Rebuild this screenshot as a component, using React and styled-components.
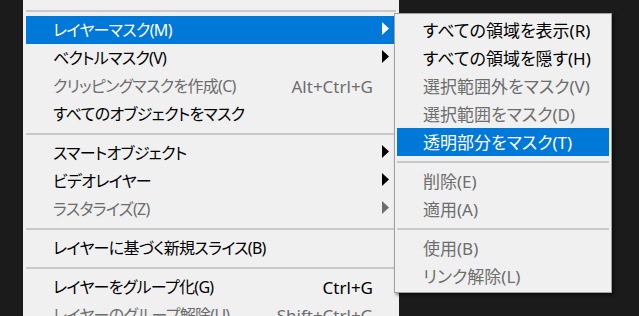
import React from 'react'
import styled, { createGlobalStyle } from 'styled-components'

const GlobalStyle = createGlobalStyle`
html, body {
  margin: 0;
  height: 316px;
  overflow: hidden;
  background: #1b1b1b;
}
body {
  font-family: "Noto Sans", "Noto Sans CJK JP", sans-serif;
  font-size: 17px;
  font-feature-settings: "palt";
}
`

const mainItems = [
  { sep: true },
  { label: 'レイヤーマスク(M)', sub: true, active: true },
  { label: 'ベクトルマスク(V)', sub: true },
  { label: 'クリッピングマスクを作成(C)', key: 'Alt+Ctrl+G', disabled: true },
  { label: 'すべてのオブジェクトをマスク' },
  { sep: true },
  { label: 'スマートオブジェクト', sub: true },
  { label: 'ビデオレイヤー', sub: true },
  { label: 'ラスタライズ(Z)', sub: true, disabled: true },
  { sep: true },
  { label: 'レイヤーに基づく新規スライス(B)' },
  { sep: true },
  { label: 'レイヤーをグループ化(G)', key: 'Ctrl+G' },
  { label: 'レイヤーのグループ解除(U)', key: 'Shift+Ctrl+G', disabled: true },
]

const subItems = [
  { label: 'すべての領域を表示(R)' },
  { label: 'すべての領域を隠す(H)' },
  { label: '選択範囲外をマスク(V)', disabled: true },
  { label: '選択範囲をマスク(D)', disabled: true },
  { label: '透明部分をマスク(T)', active: true },
  { sep: true },
  { label: '削除(E)', disabled: true },
  { label: '適用(A)', disabled: true },
  { sep: true },
  { label: '使用(B)', disabled: true },
  { label: 'リンク解除(L)', disabled: true },
]

const Arrow = () => (
  <svg width="7" height="13" viewBox="0 0 7 13">
    <polygon points="0,0 7,6.5 0,13" fill="currentColor" />
  </svg>
)

const App = () => {
  return (
    <Page>
      <GlobalStyle />
      <Menu>
        {mainItems.map((it, i) =>
          it.sep ? (
            <Separator key={i} />
          ) : (
            <Item key={i} $active={it.active} $disabled={it.disabled}>
              <Label>{it.label}</Label>
              {it.key && <Shortcut>{it.key}</Shortcut>}
              <ArrowCell>{it.sub && <Arrow />}</ArrowCell>
            </Item>
          )
        )}

        <SubMenu>
          {subItems.map((it, i) =>
            it.sep ? (
              <Separator key={i} />
            ) : (
              <SubItem key={i} $active={it.active} $disabled={it.disabled}>
                {it.label}
              </SubItem>
            )
          )}
        </SubMenu>
      </Menu>
    </Page>
  )
}

export default App

const Page = styled.div`
height: 316px;
overflow: hidden;
padding-left: 23px;
`

const Menu = styled.div`
position: relative;
width: 376px;
height: 100%;
box-sizing: border-box;
padding: 5px 3px 0;
background: #f0f0f0;
`

const Separator = styled.div`
height: 11px;
display: flex;
align-items: center;

&::after {
  content: '';
  flex: 1;
  height: 2px;
  background: #c9c9c9;
}
`

const Item = styled.div`
display: flex;
align-items: center;
height: 28px;
line-height: 1;
padding-left: 27px;
white-space: nowrap;
color: ${p => (p.$active ? '#fff' : p.$disabled ? '#6d6d6d' : '#000')};
background: ${p => (p.$active ? '#0078d7' : 'transparent')};
`

/* kana in the original UI font run narrower than Noto's, so tighten a bit */
const Label = styled.span`
flex: 1;
font-size: 16px;
letter-spacing: -0.7px;
`

const Shortcut = styled.span``

const ArrowCell = styled.span`
width: 23px;
display: flex;
justify-content: flex-end;
padding-right: 7px;
box-sizing: border-box;

svg {
  transform: translateY(-2px);
}
`

const SubMenu = styled.div`
position: absolute;
left: 371px;
top: 13px;
width: 218px;
box-sizing: border-box;
padding: 2px;
background: #f0f0f0;
border: 1px solid #a0a0a0;
box-shadow: 2px 2px 3px rgba(0, 0, 0, 0.5);
`

const SubItem = styled(Item)`
padding-left: 26px;
`
